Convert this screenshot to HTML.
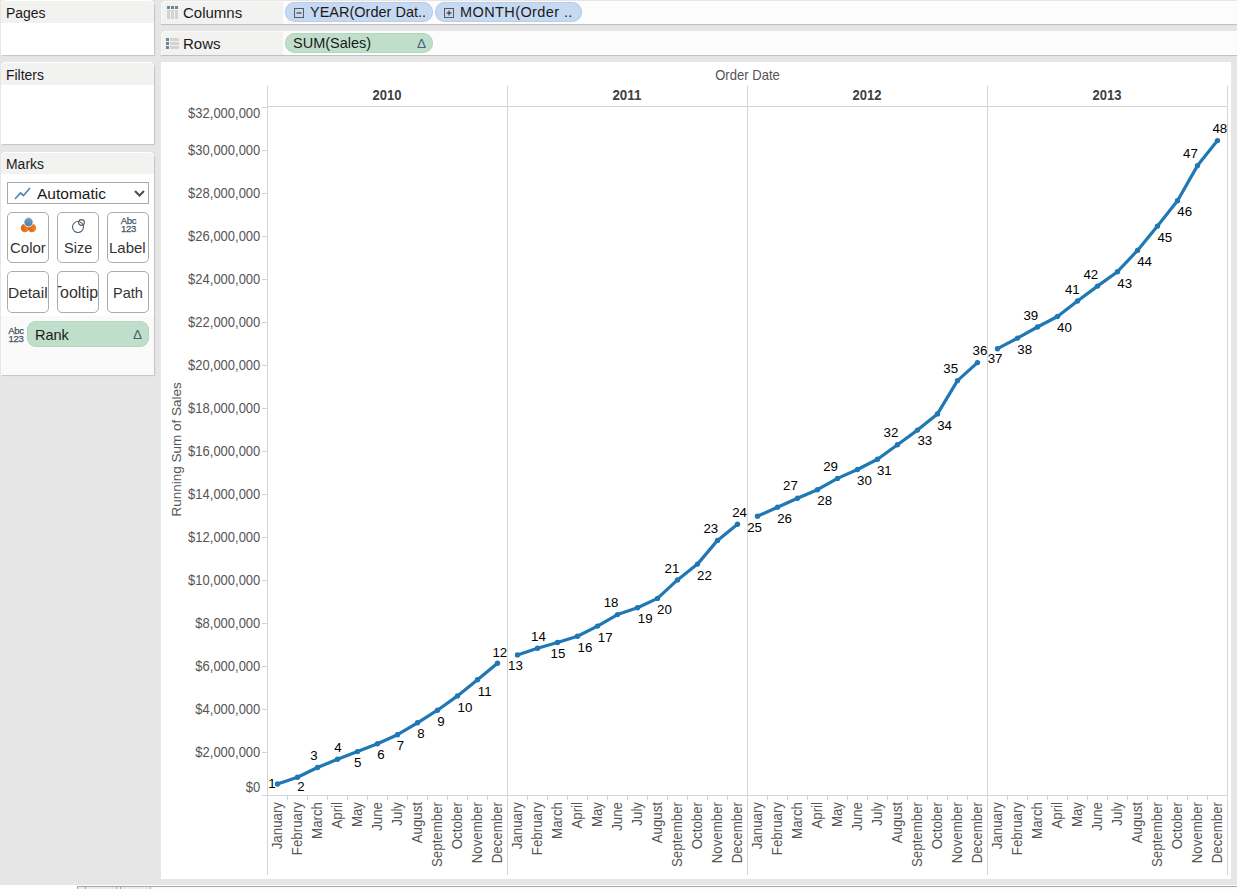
<!DOCTYPE html>
<html><head><meta charset="utf-8">
<style>
*{margin:0;padding:0;box-sizing:border-box}
html,body{width:1237px;height:889px;overflow:hidden;background:#e6e6e6;font-family:"Liberation Sans",sans-serif;position:relative}
.abs{position:absolute}
.panel{position:absolute;left:1px;width:153px;background:#fff;border-radius:5px 5px 0 0;box-shadow:1px 1px 1px #c4c4c4}
.ph{position:absolute;left:0;top:0;width:100%;background:#f2f2f1;box-shadow:inset 0 1px 0 #fff;border-radius:5px 5px 0 0;color:#1a1a1a;font-size:14px;padding-left:5px}
.shelf{position:absolute;left:161px;right:0;background:#fcfcfc;box-shadow:0 1px 1px #bdbdbd;border-radius:5px 0 0 0}
.sl{position:absolute;left:0;top:0;width:122px;height:100%;background:#f2f2f1;box-shadow:inset 1px 1px 0 #fafafa;border-radius:5px 0 0 0;font-size:15px;color:#1a1a1a}
.pill{position:absolute;height:20px;border-radius:10px;font-size:14.5px;color:#1a1a1a;white-space:nowrap}
.blue{background:#c6d9f1;box-shadow:inset 0 0 0 1px #b7cdec}
.green{background:#c0dfcb;box-shadow:inset 0 0 0 1px #b3d6bf}
.pt{position:absolute;left:5px;top:4px;font-size:15.5px;transform:scaleX(0.9);transform-origin:0 0;white-space:nowrap}
.btn{position:absolute;width:42px;height:51px;border:1px solid #ababab;border-radius:5px;background:#fff;overflow:hidden;font-size:15px;color:#333}
svg text{font-family:"Liberation Sans",sans-serif}
.yl{font-size:14.2px;fill:#555}
.dl{font-size:13.3px;fill:#000}
.ml{font-size:14px;fill:#555}
.yr{font-size:14px;font-weight:bold;fill:#404040}
.od{font-size:14px;fill:#555}
.ax{font-size:13.5px;fill:#555}
</style></head><body>
<!-- left panels -->
<div class="panel" style="top:0;height:55px"><div class="ph" style="height:23px"><span class="pt">Pages</span></div></div>
<div class="panel" style="top:62px;height:82px"><div class="ph" style="height:23px"><span class="pt">Filters</span></div></div>
<div class="panel" style="top:152px;height:223px;background:#fafafa">
  <div class="ph" style="height:22px"><span class="pt" style="top:3px">Marks</span></div>
  <div class="abs" style="left:0;top:22px;width:153px;height:142px;background:#fff"></div>
  <div class="abs" style="left:6px;top:30px;width:142px;height:22px;border:1px solid #a9a9a9;background:#fff;font-size:15.5px;color:#1a1a1a">
    <svg class="abs" style="left:6px;top:4px" width="18" height="13" viewBox="0 0 18 13"><polyline points="1,12 6.5,6 9.5,8.5 16,1" fill="none" stroke="#5b87aa" stroke-width="1.7"/></svg>
    <span class="abs" style="left:29px;top:2px">Automatic</span>
    <svg class="abs" style="left:126px;top:6px" width="11" height="9" viewBox="0 0 11 9"><polyline points="1,2 5.5,6.5 10,2" fill="none" stroke="#4d4d4d" stroke-width="2"/></svg>
  </div>
  <div class="btn" style="left:6px;top:60px"><svg class="abs" style="left:10px;top:4px" width="20" height="16" viewBox="0 0 20 16"><defs><linearGradient id="og" x1="0" x2="1"><stop offset="0" stop-color="#d8600f"/><stop offset="1" stop-color="#f48a2c"/></linearGradient><linearGradient id="bg" x1="0" y1="0" x2="0" y2="1"><stop offset="0" stop-color="#6d9cc4"/><stop offset="1" stop-color="#4f7fa8"/></linearGradient></defs><circle cx="7" cy="11" r="4.2" fill="url(#og)"/><circle cx="14" cy="11" r="4.2" fill="url(#og)"/><circle cx="10.5" cy="5.2" r="4.6" fill="url(#bg)" stroke="#fff" stroke-width="0.8"/></svg><span class="abs" style="left:2px;top:26px">Color</span></div>
  <div class="btn" style="left:56px;top:60px"><svg class="abs" style="left:12px;top:4px" width="18" height="16" viewBox="0 0 18 16"><circle cx="8" cy="10" r="5.5" fill="none" stroke="#4a5f73" stroke-width="1.1"/><circle cx="11.5" cy="5.5" r="2.9" fill="none" stroke="#4a5f73" stroke-width="1.1"/></svg><span class="abs" style="left:6px;top:27px;font-size:14.5px">Size</span></div>
  <div class="btn" style="left:106px;top:60px"><div class="abs" style="left:11.5px;top:4px;width:18px;font-size:9.5px;line-height:8px;color:#3f5468;-webkit-text-stroke:0.25px #3f5468;text-align:center;letter-spacing:-0.3px">Abc<br>123</div><span class="abs" style="left:1px;top:26px">Label</span></div>
  <div class="btn" style="left:6px;top:119px;height:42px"><span class="abs" style="left:0px;top:12px;font-size:15.5px">Detail</span></div>
  <div class="btn" style="left:56px;top:119px;height:42px"><span class="abs" style="left:-6px;top:12px;font-size:16px">Tooltip</span></div>
  <div class="btn" style="left:106px;top:119px;height:42px"><span class="abs" style="left:5px;top:13px;font-size:14.5px">Path</span></div>
  <div class="abs" style="left:6px;top:175px;width:18px;font-size:9.5px;line-height:8px;color:#3f5468;-webkit-text-stroke:0.25px #3f5468;text-align:center;letter-spacing:-0.3px">Abc<br>123</div>
  <div class="pill green" style="left:26px;top:169px;width:122px;height:26px;border-radius:9px"><span class="abs" style="left:8px;top:6px">Rank</span><span class="abs" style="left:106px;top:6px;font-size:13.5px;color:#4a5f73">&#916;</span></div>
</div>
<!-- shelves -->
<div class="shelf" style="top:1px;height:23px"><div class="sl"><svg class="abs" style="left:5px;top:4px" width="12" height="14" viewBox="0 0 12 14"><g fill="#6f8496"><rect x="1" y="1" width="3" height="3"/><rect x="5" y="1" width="3" height="3"/><rect x="9" y="1" width="3" height="3"/></g><g fill="#d3d3d3"><rect x="1" y="5" width="3" height="9"/><rect x="5" y="5" width="3" height="9"/><rect x="9" y="5" width="3" height="9"/></g></svg><span class="abs" style="left:22px;top:3px">Columns</span></div></div>
<div class="shelf" style="top:31px;height:24px"><div class="sl"><svg class="abs" style="left:4px;top:6px" width="14" height="12" viewBox="0 0 14 12"><g fill="#6f8496"><rect x="1" y="1" width="3" height="3"/><rect x="1" y="5" width="3" height="3"/><rect x="1" y="9" width="3" height="3"/></g><g fill="#d3d3d3"><rect x="5" y="1" width="9" height="3"/><rect x="5" y="5" width="9" height="3"/><rect x="5" y="9" width="9" height="3"/></g></svg><span class="abs" style="left:22px;top:4px">Rows</span></div></div>
<div class="pill blue" style="left:285px;top:2px;width:148px"><svg class="abs" style="left:9px;top:6px" width="10" height="10" viewBox="0 0 10 10"><rect x="0.5" y="0.5" width="9" height="9" fill="none" stroke="#5a5a5a" stroke-width="1"/><line x1="2.5" y1="5" x2="7.5" y2="5" stroke="#222" stroke-width="1"/></svg><span class="abs" style="left:25px;top:2px">YEAR(Order Dat..</span></div>
<div class="pill blue" style="left:435px;top:2px;width:147px"><svg class="abs" style="left:9px;top:6px" width="10" height="10" viewBox="0 0 10 10"><rect x="0.5" y="0.5" width="9" height="9" fill="none" stroke="#5a5a5a" stroke-width="1"/><line x1="2.5" y1="5" x2="7.5" y2="5" stroke="#222" stroke-width="1"/><line x1="5" y1="2.5" x2="5" y2="7.5" stroke="#222" stroke-width="1"/></svg><span class="abs" style="left:25px;top:2px;font-size:14.5px;letter-spacing:0.4px">MONTH(Order ..</span></div>
<div class="pill green" style="left:285px;top:33px;width:148px"><span class="abs" style="left:8px;top:2px">SUM(Sales)</span><span class="abs" style="left:132px;top:3px;font-size:13.5px;color:#4a5f73">&#916;</span></div>
<!-- chart area -->
<div class="abs" style="left:161px;top:62px;width:1070px;height:817px;background:#fff"></div>
<svg class="abs" style="left:0;top:0" width="1237" height="889" viewBox="0 0 1237 889">
<line x1="267.5" y1="86" x2="267.5" y2="875" stroke="#d4d4d4" stroke-width="1"/>
<line x1="507.5" y1="86" x2="507.5" y2="875" stroke="#d4d4d4" stroke-width="1"/>
<line x1="747.5" y1="86" x2="747.5" y2="875" stroke="#d4d4d4" stroke-width="1"/>
<line x1="987.5" y1="86" x2="987.5" y2="875" stroke="#d4d4d4" stroke-width="1"/>
<line x1="1227.5" y1="86" x2="1227.5" y2="875" stroke="#d4d4d4" stroke-width="1"/>
<line x1="267.5" y1="106.5" x2="1227.5" y2="106.5" stroke="#d4d4d4" stroke-width="1"/>
<line x1="267.5" y1="795.5" x2="1227.5" y2="795.5" stroke="#d4d4d4" stroke-width="1"/>
<line x1="287.5" y1="795" x2="287.5" y2="800" stroke="#d4d4d4" stroke-width="1"/>
<line x1="307.5" y1="795" x2="307.5" y2="800" stroke="#d4d4d4" stroke-width="1"/>
<line x1="327.5" y1="795" x2="327.5" y2="800" stroke="#d4d4d4" stroke-width="1"/>
<line x1="347.5" y1="795" x2="347.5" y2="800" stroke="#d4d4d4" stroke-width="1"/>
<line x1="367.5" y1="795" x2="367.5" y2="800" stroke="#d4d4d4" stroke-width="1"/>
<line x1="387.5" y1="795" x2="387.5" y2="800" stroke="#d4d4d4" stroke-width="1"/>
<line x1="407.5" y1="795" x2="407.5" y2="800" stroke="#d4d4d4" stroke-width="1"/>
<line x1="427.5" y1="795" x2="427.5" y2="800" stroke="#d4d4d4" stroke-width="1"/>
<line x1="447.5" y1="795" x2="447.5" y2="800" stroke="#d4d4d4" stroke-width="1"/>
<line x1="467.5" y1="795" x2="467.5" y2="800" stroke="#d4d4d4" stroke-width="1"/>
<line x1="487.5" y1="795" x2="487.5" y2="800" stroke="#d4d4d4" stroke-width="1"/>
<line x1="527.5" y1="795" x2="527.5" y2="800" stroke="#d4d4d4" stroke-width="1"/>
<line x1="547.5" y1="795" x2="547.5" y2="800" stroke="#d4d4d4" stroke-width="1"/>
<line x1="567.5" y1="795" x2="567.5" y2="800" stroke="#d4d4d4" stroke-width="1"/>
<line x1="587.5" y1="795" x2="587.5" y2="800" stroke="#d4d4d4" stroke-width="1"/>
<line x1="607.5" y1="795" x2="607.5" y2="800" stroke="#d4d4d4" stroke-width="1"/>
<line x1="627.5" y1="795" x2="627.5" y2="800" stroke="#d4d4d4" stroke-width="1"/>
<line x1="647.5" y1="795" x2="647.5" y2="800" stroke="#d4d4d4" stroke-width="1"/>
<line x1="667.5" y1="795" x2="667.5" y2="800" stroke="#d4d4d4" stroke-width="1"/>
<line x1="687.5" y1="795" x2="687.5" y2="800" stroke="#d4d4d4" stroke-width="1"/>
<line x1="707.5" y1="795" x2="707.5" y2="800" stroke="#d4d4d4" stroke-width="1"/>
<line x1="727.5" y1="795" x2="727.5" y2="800" stroke="#d4d4d4" stroke-width="1"/>
<line x1="767.5" y1="795" x2="767.5" y2="800" stroke="#d4d4d4" stroke-width="1"/>
<line x1="787.5" y1="795" x2="787.5" y2="800" stroke="#d4d4d4" stroke-width="1"/>
<line x1="807.5" y1="795" x2="807.5" y2="800" stroke="#d4d4d4" stroke-width="1"/>
<line x1="827.5" y1="795" x2="827.5" y2="800" stroke="#d4d4d4" stroke-width="1"/>
<line x1="847.5" y1="795" x2="847.5" y2="800" stroke="#d4d4d4" stroke-width="1"/>
<line x1="867.5" y1="795" x2="867.5" y2="800" stroke="#d4d4d4" stroke-width="1"/>
<line x1="887.5" y1="795" x2="887.5" y2="800" stroke="#d4d4d4" stroke-width="1"/>
<line x1="907.5" y1="795" x2="907.5" y2="800" stroke="#d4d4d4" stroke-width="1"/>
<line x1="927.5" y1="795" x2="927.5" y2="800" stroke="#d4d4d4" stroke-width="1"/>
<line x1="947.5" y1="795" x2="947.5" y2="800" stroke="#d4d4d4" stroke-width="1"/>
<line x1="967.5" y1="795" x2="967.5" y2="800" stroke="#d4d4d4" stroke-width="1"/>
<line x1="1007.5" y1="795" x2="1007.5" y2="800" stroke="#d4d4d4" stroke-width="1"/>
<line x1="1027.5" y1="795" x2="1027.5" y2="800" stroke="#d4d4d4" stroke-width="1"/>
<line x1="1047.5" y1="795" x2="1047.5" y2="800" stroke="#d4d4d4" stroke-width="1"/>
<line x1="1067.5" y1="795" x2="1067.5" y2="800" stroke="#d4d4d4" stroke-width="1"/>
<line x1="1087.5" y1="795" x2="1087.5" y2="800" stroke="#d4d4d4" stroke-width="1"/>
<line x1="1107.5" y1="795" x2="1107.5" y2="800" stroke="#d4d4d4" stroke-width="1"/>
<line x1="1127.5" y1="795" x2="1127.5" y2="800" stroke="#d4d4d4" stroke-width="1"/>
<line x1="1147.5" y1="795" x2="1147.5" y2="800" stroke="#d4d4d4" stroke-width="1"/>
<line x1="1167.5" y1="795" x2="1167.5" y2="800" stroke="#d4d4d4" stroke-width="1"/>
<line x1="1187.5" y1="795" x2="1187.5" y2="800" stroke="#d4d4d4" stroke-width="1"/>
<line x1="1207.5" y1="795" x2="1207.5" y2="800" stroke="#d4d4d4" stroke-width="1"/>
<line x1="262" y1="795.5" x2="267.5" y2="795.5" stroke="#d4d4d4" stroke-width="1"/>
<line x1="262" y1="752.5" x2="267.5" y2="752.5" stroke="#d4d4d4" stroke-width="1"/>
<line x1="262" y1="709.5" x2="267.5" y2="709.5" stroke="#d4d4d4" stroke-width="1"/>
<line x1="262" y1="666.5" x2="267.5" y2="666.5" stroke="#d4d4d4" stroke-width="1"/>
<line x1="262" y1="623.5" x2="267.5" y2="623.5" stroke="#d4d4d4" stroke-width="1"/>
<line x1="262" y1="580.5" x2="267.5" y2="580.5" stroke="#d4d4d4" stroke-width="1"/>
<line x1="262" y1="537.5" x2="267.5" y2="537.5" stroke="#d4d4d4" stroke-width="1"/>
<line x1="262" y1="494.5" x2="267.5" y2="494.5" stroke="#d4d4d4" stroke-width="1"/>
<line x1="262" y1="451.5" x2="267.5" y2="451.5" stroke="#d4d4d4" stroke-width="1"/>
<line x1="262" y1="408.5" x2="267.5" y2="408.5" stroke="#d4d4d4" stroke-width="1"/>
<line x1="262" y1="365.5" x2="267.5" y2="365.5" stroke="#d4d4d4" stroke-width="1"/>
<line x1="262" y1="322.5" x2="267.5" y2="322.5" stroke="#d4d4d4" stroke-width="1"/>
<line x1="262" y1="279.5" x2="267.5" y2="279.5" stroke="#d4d4d4" stroke-width="1"/>
<line x1="262" y1="236.5" x2="267.5" y2="236.5" stroke="#d4d4d4" stroke-width="1"/>
<line x1="262" y1="193.5" x2="267.5" y2="193.5" stroke="#d4d4d4" stroke-width="1"/>
<line x1="262" y1="150.5" x2="267.5" y2="150.5" stroke="#d4d4d4" stroke-width="1"/>
<line x1="262" y1="107.5" x2="267.5" y2="107.5" stroke="#d4d4d4" stroke-width="1"/>
<text transform="translate(260.3,792.3) scale(0.915,1)" text-anchor="end" class="yl">$0</text>
<text transform="translate(260.3,756.8) scale(0.915,1)" text-anchor="end" class="yl">$2,000,000</text>
<text transform="translate(260.3,713.8) scale(0.915,1)" text-anchor="end" class="yl">$4,000,000</text>
<text transform="translate(260.3,670.8) scale(0.915,1)" text-anchor="end" class="yl">$6,000,000</text>
<text transform="translate(260.3,627.8) scale(0.915,1)" text-anchor="end" class="yl">$8,000,000</text>
<text transform="translate(260.3,584.8) scale(0.915,1)" text-anchor="end" class="yl">$10,000,000</text>
<text transform="translate(260.3,541.8) scale(0.915,1)" text-anchor="end" class="yl">$12,000,000</text>
<text transform="translate(260.3,498.8) scale(0.915,1)" text-anchor="end" class="yl">$14,000,000</text>
<text transform="translate(260.3,455.8) scale(0.915,1)" text-anchor="end" class="yl">$16,000,000</text>
<text transform="translate(260.3,412.8) scale(0.915,1)" text-anchor="end" class="yl">$18,000,000</text>
<text transform="translate(260.3,369.8) scale(0.915,1)" text-anchor="end" class="yl">$20,000,000</text>
<text transform="translate(260.3,326.8) scale(0.915,1)" text-anchor="end" class="yl">$22,000,000</text>
<text transform="translate(260.3,283.8) scale(0.915,1)" text-anchor="end" class="yl">$24,000,000</text>
<text transform="translate(260.3,240.8) scale(0.915,1)" text-anchor="end" class="yl">$26,000,000</text>
<text transform="translate(260.3,197.8) scale(0.915,1)" text-anchor="end" class="yl">$28,000,000</text>
<text transform="translate(260.3,154.8) scale(0.915,1)" text-anchor="end" class="yl">$30,000,000</text>
<text transform="translate(260.3,118.4) scale(0.915,1)" text-anchor="end" class="yl">$32,000,000</text>
<polyline points="277.5,784.0 297.5,777.2 317.5,767.5 337.5,759.3 357.5,751.6 377.5,743.8 397.5,734.7 417.5,722.8 437.5,710.2 457.5,695.9 477.5,679.8 497.5,663.3" fill="none" stroke="#1f77b4" stroke-width="3.2" stroke-linejoin="round" stroke-linecap="round"/>
<polyline points="517.5,654.9 537.5,648.2 557.5,642.5 577.5,636.2 597.5,626.1 617.5,614.6 637.5,607.8 657.5,598.4 677.5,579.9 697.5,564.1 717.5,540.4 737.5,524.2" fill="none" stroke="#1f77b4" stroke-width="3.2" stroke-linejoin="round" stroke-linecap="round"/>
<polyline points="757.5,516.2 777.5,507.2 797.5,498.2 817.5,489.7 837.5,478.4 857.5,469.5 877.5,459.3 897.5,444.7 917.5,430.1 937.5,413.9 957.5,380.6 977.5,362.6" fill="none" stroke="#1f77b4" stroke-width="3.2" stroke-linejoin="round" stroke-linecap="round"/>
<polyline points="997.5,348.7 1017.5,338.1 1037.5,327.0 1057.5,316.5 1077.5,301.0 1097.5,286.1 1117.5,271.7 1137.5,250.4 1157.5,226.1 1177.5,200.7 1197.5,165.6 1217.5,140.6" fill="none" stroke="#1f77b4" stroke-width="3.2" stroke-linejoin="round" stroke-linecap="round"/>
<circle cx="277.5" cy="784.0" r="2.7" fill="#1f77b4"/>
<circle cx="297.5" cy="777.2" r="2.7" fill="#1f77b4"/>
<circle cx="317.5" cy="767.5" r="2.7" fill="#1f77b4"/>
<circle cx="337.5" cy="759.3" r="2.7" fill="#1f77b4"/>
<circle cx="357.5" cy="751.6" r="2.7" fill="#1f77b4"/>
<circle cx="377.5" cy="743.8" r="2.7" fill="#1f77b4"/>
<circle cx="397.5" cy="734.7" r="2.7" fill="#1f77b4"/>
<circle cx="417.5" cy="722.8" r="2.7" fill="#1f77b4"/>
<circle cx="437.5" cy="710.2" r="2.7" fill="#1f77b4"/>
<circle cx="457.5" cy="695.9" r="2.7" fill="#1f77b4"/>
<circle cx="477.5" cy="679.8" r="2.7" fill="#1f77b4"/>
<circle cx="497.5" cy="663.3" r="2.7" fill="#1f77b4"/>
<circle cx="517.5" cy="654.9" r="2.7" fill="#1f77b4"/>
<circle cx="537.5" cy="648.2" r="2.7" fill="#1f77b4"/>
<circle cx="557.5" cy="642.5" r="2.7" fill="#1f77b4"/>
<circle cx="577.5" cy="636.2" r="2.7" fill="#1f77b4"/>
<circle cx="597.5" cy="626.1" r="2.7" fill="#1f77b4"/>
<circle cx="617.5" cy="614.6" r="2.7" fill="#1f77b4"/>
<circle cx="637.5" cy="607.8" r="2.7" fill="#1f77b4"/>
<circle cx="657.5" cy="598.4" r="2.7" fill="#1f77b4"/>
<circle cx="677.5" cy="579.9" r="2.7" fill="#1f77b4"/>
<circle cx="697.5" cy="564.1" r="2.7" fill="#1f77b4"/>
<circle cx="717.5" cy="540.4" r="2.7" fill="#1f77b4"/>
<circle cx="737.5" cy="524.2" r="2.7" fill="#1f77b4"/>
<circle cx="757.5" cy="516.2" r="2.7" fill="#1f77b4"/>
<circle cx="777.5" cy="507.2" r="2.7" fill="#1f77b4"/>
<circle cx="797.5" cy="498.2" r="2.7" fill="#1f77b4"/>
<circle cx="817.5" cy="489.7" r="2.7" fill="#1f77b4"/>
<circle cx="837.5" cy="478.4" r="2.7" fill="#1f77b4"/>
<circle cx="857.5" cy="469.5" r="2.7" fill="#1f77b4"/>
<circle cx="877.5" cy="459.3" r="2.7" fill="#1f77b4"/>
<circle cx="897.5" cy="444.7" r="2.7" fill="#1f77b4"/>
<circle cx="917.5" cy="430.1" r="2.7" fill="#1f77b4"/>
<circle cx="937.5" cy="413.9" r="2.7" fill="#1f77b4"/>
<circle cx="957.5" cy="380.6" r="2.7" fill="#1f77b4"/>
<circle cx="977.5" cy="362.6" r="2.7" fill="#1f77b4"/>
<circle cx="997.5" cy="348.7" r="2.7" fill="#1f77b4"/>
<circle cx="1017.5" cy="338.1" r="2.7" fill="#1f77b4"/>
<circle cx="1037.5" cy="327.0" r="2.7" fill="#1f77b4"/>
<circle cx="1057.5" cy="316.5" r="2.7" fill="#1f77b4"/>
<circle cx="1077.5" cy="301.0" r="2.7" fill="#1f77b4"/>
<circle cx="1097.5" cy="286.1" r="2.7" fill="#1f77b4"/>
<circle cx="1117.5" cy="271.7" r="2.7" fill="#1f77b4"/>
<circle cx="1137.5" cy="250.4" r="2.7" fill="#1f77b4"/>
<circle cx="1157.5" cy="226.1" r="2.7" fill="#1f77b4"/>
<circle cx="1177.5" cy="200.7" r="2.7" fill="#1f77b4"/>
<circle cx="1197.5" cy="165.6" r="2.7" fill="#1f77b4"/>
<circle cx="1217.5" cy="140.6" r="2.7" fill="#1f77b4"/>
<text x="272.0" y="788.3" text-anchor="middle" class="dl">1</text>
<text x="301.0" y="790.7" text-anchor="middle" class="dl">2</text>
<text x="314.0" y="760.2" text-anchor="middle" class="dl">3</text>
<text x="338.0" y="752.0" text-anchor="middle" class="dl">4</text>
<text x="357.8" y="766.7" text-anchor="middle" class="dl">5</text>
<text x="381.0" y="759.2" text-anchor="middle" class="dl">6</text>
<text x="400.5" y="749.7" text-anchor="middle" class="dl">7</text>
<text x="420.9" y="737.7" text-anchor="middle" class="dl">8</text>
<text x="441.0" y="725.7" text-anchor="middle" class="dl">9</text>
<text x="465.0" y="711.7" text-anchor="middle" class="dl">10</text>
<text x="484.7" y="696.1" text-anchor="middle" class="dl">11</text>
<text x="499.8" y="656.7" text-anchor="middle" class="dl">12</text>
<text x="515.5" y="669.7" text-anchor="middle" class="dl">13</text>
<text x="538.4" y="641.3" text-anchor="middle" class="dl">14</text>
<text x="558.0" y="657.7" text-anchor="middle" class="dl">15</text>
<text x="584.9" y="652.2" text-anchor="middle" class="dl">16</text>
<text x="605.2" y="641.7" text-anchor="middle" class="dl">17</text>
<text x="611.1" y="607.1" text-anchor="middle" class="dl">18</text>
<text x="645.2" y="622.8" text-anchor="middle" class="dl">19</text>
<text x="664.5" y="614.0" text-anchor="middle" class="dl">20</text>
<text x="671.9" y="573.0" text-anchor="middle" class="dl">21</text>
<text x="704.5" y="579.9" text-anchor="middle" class="dl">22</text>
<text x="710.8" y="533.1" text-anchor="middle" class="dl">23</text>
<text x="739.6" y="516.7" text-anchor="middle" class="dl">24</text>
<text x="754.6" y="531.7" text-anchor="middle" class="dl">25</text>
<text x="784.6" y="522.7" text-anchor="middle" class="dl">26</text>
<text x="790.5" y="489.9" text-anchor="middle" class="dl">27</text>
<text x="824.7" y="505.0" text-anchor="middle" class="dl">28</text>
<text x="830.6" y="470.8" text-anchor="middle" class="dl">29</text>
<text x="864.5" y="484.7" text-anchor="middle" class="dl">30</text>
<text x="884.3" y="474.6" text-anchor="middle" class="dl">31</text>
<text x="891.0" y="437.0" text-anchor="middle" class="dl">32</text>
<text x="924.8" y="445.4" text-anchor="middle" class="dl">33</text>
<text x="944.6" y="429.8" text-anchor="middle" class="dl">34</text>
<text x="950.7" y="372.9" text-anchor="middle" class="dl">35</text>
<text x="979.9" y="354.9" text-anchor="middle" class="dl">36</text>
<text x="995.1" y="363.3" text-anchor="middle" class="dl">37</text>
<text x="1024.7" y="353.9" text-anchor="middle" class="dl">38</text>
<text x="1030.8" y="320.0" text-anchor="middle" class="dl">39</text>
<text x="1064.5" y="331.7" text-anchor="middle" class="dl">40</text>
<text x="1072.3" y="293.7" text-anchor="middle" class="dl">41</text>
<text x="1090.8" y="279.1" text-anchor="middle" class="dl">42</text>
<text x="1124.7" y="287.8" text-anchor="middle" class="dl">43</text>
<text x="1144.6" y="265.9" text-anchor="middle" class="dl">44</text>
<text x="1164.8" y="241.9" text-anchor="middle" class="dl">45</text>
<text x="1184.7" y="215.6" text-anchor="middle" class="dl">46</text>
<text x="1190.5" y="158.0" text-anchor="middle" class="dl">47</text>
<text x="1219.8" y="132.8" text-anchor="middle" class="dl">48</text>
<text transform="translate(282.0,802) rotate(-90) scale(0.95,1)" text-anchor="end" class="ml">January</text>
<text transform="translate(302.0,802) rotate(-90) scale(0.95,1)" text-anchor="end" class="ml">February</text>
<text transform="translate(322.0,802) rotate(-90) scale(0.95,1)" text-anchor="end" class="ml">March</text>
<text transform="translate(342.0,802) rotate(-90) scale(0.95,1)" text-anchor="end" class="ml">April</text>
<text transform="translate(362.0,802) rotate(-90) scale(0.95,1)" text-anchor="end" class="ml">May</text>
<text transform="translate(382.0,802) rotate(-90) scale(0.95,1)" text-anchor="end" class="ml">June</text>
<text transform="translate(402.0,802) rotate(-90) scale(0.95,1)" text-anchor="end" class="ml">July</text>
<text transform="translate(422.0,802) rotate(-90) scale(0.95,1)" text-anchor="end" class="ml">August</text>
<text transform="translate(442.0,802) rotate(-90) scale(0.95,1)" text-anchor="end" class="ml">September</text>
<text transform="translate(462.0,802) rotate(-90) scale(0.95,1)" text-anchor="end" class="ml">October</text>
<text transform="translate(482.0,802) rotate(-90) scale(0.95,1)" text-anchor="end" class="ml">November</text>
<text transform="translate(502.0,802) rotate(-90) scale(0.95,1)" text-anchor="end" class="ml">December</text>
<text transform="translate(522.0,802) rotate(-90) scale(0.95,1)" text-anchor="end" class="ml">January</text>
<text transform="translate(542.0,802) rotate(-90) scale(0.95,1)" text-anchor="end" class="ml">February</text>
<text transform="translate(562.0,802) rotate(-90) scale(0.95,1)" text-anchor="end" class="ml">March</text>
<text transform="translate(582.0,802) rotate(-90) scale(0.95,1)" text-anchor="end" class="ml">April</text>
<text transform="translate(602.0,802) rotate(-90) scale(0.95,1)" text-anchor="end" class="ml">May</text>
<text transform="translate(622.0,802) rotate(-90) scale(0.95,1)" text-anchor="end" class="ml">June</text>
<text transform="translate(642.0,802) rotate(-90) scale(0.95,1)" text-anchor="end" class="ml">July</text>
<text transform="translate(662.0,802) rotate(-90) scale(0.95,1)" text-anchor="end" class="ml">August</text>
<text transform="translate(682.0,802) rotate(-90) scale(0.95,1)" text-anchor="end" class="ml">September</text>
<text transform="translate(702.0,802) rotate(-90) scale(0.95,1)" text-anchor="end" class="ml">October</text>
<text transform="translate(722.0,802) rotate(-90) scale(0.95,1)" text-anchor="end" class="ml">November</text>
<text transform="translate(742.0,802) rotate(-90) scale(0.95,1)" text-anchor="end" class="ml">December</text>
<text transform="translate(762.0,802) rotate(-90) scale(0.95,1)" text-anchor="end" class="ml">January</text>
<text transform="translate(782.0,802) rotate(-90) scale(0.95,1)" text-anchor="end" class="ml">February</text>
<text transform="translate(802.0,802) rotate(-90) scale(0.95,1)" text-anchor="end" class="ml">March</text>
<text transform="translate(822.0,802) rotate(-90) scale(0.95,1)" text-anchor="end" class="ml">April</text>
<text transform="translate(842.0,802) rotate(-90) scale(0.95,1)" text-anchor="end" class="ml">May</text>
<text transform="translate(862.0,802) rotate(-90) scale(0.95,1)" text-anchor="end" class="ml">June</text>
<text transform="translate(882.0,802) rotate(-90) scale(0.95,1)" text-anchor="end" class="ml">July</text>
<text transform="translate(902.0,802) rotate(-90) scale(0.95,1)" text-anchor="end" class="ml">August</text>
<text transform="translate(922.0,802) rotate(-90) scale(0.95,1)" text-anchor="end" class="ml">September</text>
<text transform="translate(942.0,802) rotate(-90) scale(0.95,1)" text-anchor="end" class="ml">October</text>
<text transform="translate(962.0,802) rotate(-90) scale(0.95,1)" text-anchor="end" class="ml">November</text>
<text transform="translate(982.0,802) rotate(-90) scale(0.95,1)" text-anchor="end" class="ml">December</text>
<text transform="translate(1002.0,802) rotate(-90) scale(0.95,1)" text-anchor="end" class="ml">January</text>
<text transform="translate(1022.0,802) rotate(-90) scale(0.95,1)" text-anchor="end" class="ml">February</text>
<text transform="translate(1042.0,802) rotate(-90) scale(0.95,1)" text-anchor="end" class="ml">March</text>
<text transform="translate(1062.0,802) rotate(-90) scale(0.95,1)" text-anchor="end" class="ml">April</text>
<text transform="translate(1082.0,802) rotate(-90) scale(0.95,1)" text-anchor="end" class="ml">May</text>
<text transform="translate(1102.0,802) rotate(-90) scale(0.95,1)" text-anchor="end" class="ml">June</text>
<text transform="translate(1122.0,802) rotate(-90) scale(0.95,1)" text-anchor="end" class="ml">July</text>
<text transform="translate(1142.0,802) rotate(-90) scale(0.95,1)" text-anchor="end" class="ml">August</text>
<text transform="translate(1162.0,802) rotate(-90) scale(0.95,1)" text-anchor="end" class="ml">September</text>
<text transform="translate(1182.0,802) rotate(-90) scale(0.95,1)" text-anchor="end" class="ml">October</text>
<text transform="translate(1202.0,802) rotate(-90) scale(0.95,1)" text-anchor="end" class="ml">November</text>
<text transform="translate(1222.0,802) rotate(-90) scale(0.95,1)" text-anchor="end" class="ml">December</text>
<text x="386.9" y="100" text-anchor="middle" class="yr" textLength="29" lengthAdjust="spacingAndGlyphs">2010</text>
<text x="626.9" y="100" text-anchor="middle" class="yr" textLength="29" lengthAdjust="spacingAndGlyphs">2011</text>
<text x="866.9" y="100" text-anchor="middle" class="yr" textLength="29" lengthAdjust="spacingAndGlyphs">2012</text>
<text x="1106.9" y="100" text-anchor="middle" class="yr" textLength="29" lengthAdjust="spacingAndGlyphs">2013</text>
<text transform="translate(747.5,79.8) scale(0.934,1)" text-anchor="middle" class="od">Order Date</text>
<text transform="translate(180.5,516.5) rotate(-90)" class="ax">Running Sum of Sales</text>
</svg>
<!-- bottom strip -->
<div class="abs" style="left:0;top:885px;width:1237px;height:4px;background:#fff"></div>
<div class="abs" style="left:77px;top:886px;width:1160px;height:3px;border-top:1px solid #a6a6a6;background:#fbfbfb"></div>
<div class="abs" style="left:77px;top:886px;width:74px;height:3px;border:1px solid #a6a6a6;border-bottom:0;background:#ececec"></div>
<div class="abs" style="left:85px;top:886px;width:1px;height:3px;background:#a6a6a6"></div>
<div class="abs" style="left:116px;top:886px;width:1px;height:3px;background:#a6a6a6"></div>
<div class="abs" style="left:120px;top:886px;width:1px;height:3px;background:#a6a6a6"></div>
</body></html>
